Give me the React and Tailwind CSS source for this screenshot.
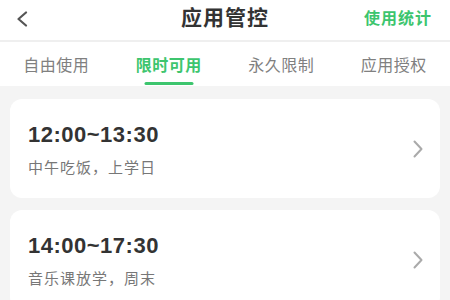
import React, { useState } from 'react';

const tabs = ['自由使用', '限时可用', '永久限制', '应用授权'];

const rules = [
  { time: '12:00~13:30', note: '中午吃饭，上学日' },
  { time: '14:00~17:30', note: '音乐课放学，周末' },
];

const font = { fontFamily: '"Noto Sans CJK SC", "Noto Sans", sans-serif' };

const Chevron = ({ className }) => (
  <svg viewBox="0 0 10 18" className={className} fill="none" stroke="currentColor" strokeWidth="2" strokeLinecap="round" strokeLinejoin="round">
    <path d="M1.5 1.5 L8.5 9 L1.5 16.5" />
  </svg>
);

const App = () => {
  const [active, setActive] = useState(1);

  return (
    <div className="w-[450px] h-[300px] overflow-hidden bg-[#f4f4f4] flex flex-col" style={font}>
      {/* Header */}
      <div className="h-[40px] bg-white relative flex items-center justify-center shrink-0">
        <button className="absolute left-[16px] top-[11px] text-[#555]">
          <svg viewBox="0 0 12 16" className="w-[12px] h-[16px]" fill="none" stroke="currentColor" strokeWidth="2.2" strokeLinecap="round" strokeLinejoin="round">
            <path d="M10 1.5 L2.5 8 L10 14.5" />
          </svg>
        </button>
        <h1 className="text-[21px] font-bold text-[#333] tracking-[1px] -mt-[6px]">应用管控</h1>
        <span className="absolute right-[18px] top-[5px] text-[16px] font-bold text-[#3dc56e] tracking-[1px]">使用统计</span>
      </div>
      <div className="h-[2px] bg-[#efefef] shrink-0" />

      {/* Tabs */}
      <div className="h-[44px] bg-white grid grid-cols-4 shrink-0">
        {tabs.map((t, i) => (
          <button key={t} onClick={() => setActive(i)} className="relative flex items-center justify-center">
            <span className={i === active ? 'text-[16px] font-bold text-[#3dc56e] tracking-[0.5px]' : 'text-[16px] text-[#808080] tracking-[0.5px]'}>{t}</span>
            {i === active && <span className="absolute bottom-[1px] left-1/2 -translate-x-1/2 w-[49px] h-[3px] rounded-full bg-[#3dc56e]" />}
          </button>
        ))}
      </div>

      {/* Rules */}
      <div className="flex flex-col gap-[12px] px-[10px] pt-[13px]">
        {rules.map((r) => (
          <div key={r.time} className="h-[99px] bg-white rounded-[12px] flex items-center justify-between pl-[18px] pr-[17px] shrink-0">
            <div className="flex flex-col">
              <span className="text-[22px] leading-[30px] font-bold text-[#333] tracking-[0.5px] font-['Liberation_Sans',sans-serif]">{r.time}</span>
              <span className="text-[15px] leading-[20px] mt-[7px] text-[#777] tracking-[1px]">{r.note}</span>
            </div>
            <Chevron className="w-[10px] h-[18px] text-[#aaa]" />
          </div>
        ))}
      </div>
    </div>
  );
};

export default App;
